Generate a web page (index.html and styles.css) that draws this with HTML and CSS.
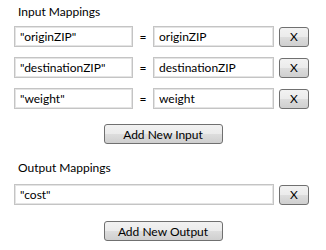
FILE: index.html
```html
<!DOCTYPE html>
<html lang="en">
<head>
    <meta charset="UTF-8">
    <title>Mappings</title>
    <link rel="stylesheet" href="styles.css">
</head>
<body>
    <div class="panel">
        <h2 class="section-title">Input Mappings</h2>

        <div class="mappings">
            <div class="mapping-row">
                <input type="text" class="field field-key" value="&quot;originZIP&quot;">
                <span class="equals">=</span>
                <input type="text" class="field field-value" value="originZIP">
                <button class="btn btn-remove">X</button>
            </div>
            <div class="mapping-row">
                <input type="text" class="field field-key" value="&quot;destinationZIP&quot;">
                <span class="equals">=</span>
                <input type="text" class="field field-value" value="destinationZIP">
                <button class="btn btn-remove">X</button>
            </div>
            <div class="mapping-row">
                <input type="text" class="field field-key" value="&quot;weight&quot;">
                <span class="equals">=</span>
                <input type="text" class="field field-value" value="weight">
                <button class="btn btn-remove">X</button>
            </div>
        </div>

        <div class="actions">
            <button class="btn btn-add">Add New Input</button>
        </div>

        <h2 class="section-title output-title">Output Mappings</h2>

        <div class="mappings output-mappings">
            <div class="mapping-row">
                <input type="text" class="field field-wide" value="&quot;cost&quot;">
                <button class="btn btn-remove">X</button>
            </div>
        </div>

        <div class="actions output-actions">
            <button class="btn btn-add">Add New Output</button>
        </div>
    </div>
</body>
</html>
```

FILE: styles.css
```css
* {
    box-sizing: border-box;
    margin: 0;
    padding: 0;
}

body {
    background-color: #fff;
    color: #000;
    font-family: 'Lato', 'Noto Sans', sans-serif;
    font-size: 12px;
}

.panel {
    width: 326px;
    padding: 4px 0 0 14px;
}

.section-title {
    font-size: 12px;
    font-weight: normal;
    line-height: 16px;
    padding-left: 4px;
    margin-bottom: 6px;
}

.output-title {
    margin-top: 16px;
    margin-bottom: 8px;
}

.mappings {
    display: flex;
    flex-direction: column;
    gap: 10px;
}

.mapping-row {
    display: flex;
    align-items: center;
    height: 21px;
}

.field {
    height: 21px;
    border: 1px solid #c4c4c4;
    box-shadow: inset 0 0 0 1px #e4e4e4;
    padding: 0 5px;
    font-family: inherit;
    font-size: 12px;
    color: #000;
    background: #fff;
    outline: none;
}

.field-key {
    width: 119px;
}

.field-value {
    width: 121px;
}

.field-wide {
    width: 260px;
}

.equals {
    width: 20px;
    text-align: center;
}

.btn {
    height: 20px;
    border: 1px solid #707070;
    border-radius: 3px;
    background: linear-gradient(to bottom, #f2f2f2 0%, #ebebeb 50%, #dddddd 51%, #cfcfcf 100%);
    font-family: inherit;
    font-size: 12px;
    color: #000;
    cursor: pointer;
}

.btn-remove {
    width: 30px;
    margin-left: 5px;
}

.actions {
    margin-top: 15px;
    margin-left: -14px;
    text-align: center;
}

.output-actions {
    margin-top: 16px;
}

.btn-add {
    width: 119px;
}
```
